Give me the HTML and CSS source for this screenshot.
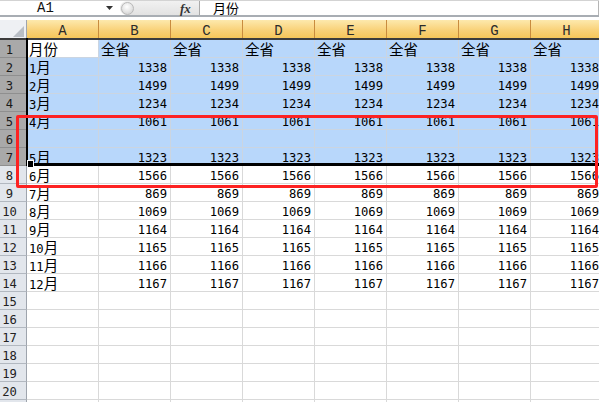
FILE: index.html
```html
<!DOCTYPE html>
<html lang="zh">
<head>
<meta charset="utf-8">
<link rel="stylesheet" href="styles.css">
</head>
<body>
<div class="fbar">
  <div class="namebox">
    <span class="ref">A1</span>
    <svg class="dd" viewBox="0 0 7 4"><path d="M0 0H7L3.5 4Z" fill="#333"/></svg>
  </div>
  <div class="tools">
    <span class="knob"></span>
    <span class="fx">fx</span>
  </div>
  <div class="formula">月份</div>
</div>
<div class="fsep"></div>

<div class="sheet">
  <div class="hdr">
    <div class="corner"><svg class="tri" viewBox="0 0 12 12"><path d="M12 0V12H0Z" fill="#b9bec5"/></svg></div>
    <div class="ch">A</div><div class="ch">B</div><div class="ch">C</div><div class="ch">D</div>
    <div class="ch">E</div><div class="ch">F</div><div class="ch">G</div><div class="ch">H</div>
  </div>

  <div class="row sel"><div class="rh">1</div><div class="c active">月份</div><div class="c">全省</div><div class="c">全省</div><div class="c">全省</div><div class="c">全省</div><div class="c">全省</div><div class="c">全省</div><div class="c">全省</div></div>
  <div class="row sel"><div class="rh">2</div><div class="c"><span class="d">1</span>月</div><div class="c n">1338</div><div class="c n">1338</div><div class="c n">1338</div><div class="c n">1338</div><div class="c n">1338</div><div class="c n">1338</div><div class="c n">1338</div></div>
  <div class="row sel"><div class="rh">3</div><div class="c"><span class="d">2</span>月</div><div class="c n">1499</div><div class="c n">1499</div><div class="c n">1499</div><div class="c n">1499</div><div class="c n">1499</div><div class="c n">1499</div><div class="c n">1499</div></div>
  <div class="row sel"><div class="rh">4</div><div class="c"><span class="d">3</span>月</div><div class="c n">1234</div><div class="c n">1234</div><div class="c n">1234</div><div class="c n">1234</div><div class="c n">1234</div><div class="c n">1234</div><div class="c n">1234</div></div>
  <div class="row sel"><div class="rh">5</div><div class="c"><span class="d">4</span>月</div><div class="c n">1061</div><div class="c n">1061</div><div class="c n">1061</div><div class="c n">1061</div><div class="c n">1061</div><div class="c n">1061</div><div class="c n">1061</div></div>
  <div class="row sel"><div class="rh">6</div><div class="c"></div><div class="c"></div><div class="c"></div><div class="c"></div><div class="c"></div><div class="c"></div><div class="c"></div><div class="c"></div></div>
  <div class="row sel"><div class="rh">7</div><div class="c"><span class="d">5</span>月</div><div class="c n">1323</div><div class="c n">1323</div><div class="c n">1323</div><div class="c n">1323</div><div class="c n">1323</div><div class="c n">1323</div><div class="c n">1323</div></div>
  <div class="row"><div class="rh">8</div><div class="c"><span class="d">6</span>月</div><div class="c n">1566</div><div class="c n">1566</div><div class="c n">1566</div><div class="c n">1566</div><div class="c n">1566</div><div class="c n">1566</div><div class="c n">1566</div></div>
  <div class="row"><div class="rh">9</div><div class="c"><span class="d">7</span>月</div><div class="c n">869</div><div class="c n">869</div><div class="c n">869</div><div class="c n">869</div><div class="c n">869</div><div class="c n">869</div><div class="c n">869</div></div>
  <div class="row"><div class="rh">10</div><div class="c"><span class="d">8</span>月</div><div class="c n">1069</div><div class="c n">1069</div><div class="c n">1069</div><div class="c n">1069</div><div class="c n">1069</div><div class="c n">1069</div><div class="c n">1069</div></div>
  <div class="row"><div class="rh">11</div><div class="c"><span class="d">9</span>月</div><div class="c n">1164</div><div class="c n">1164</div><div class="c n">1164</div><div class="c n">1164</div><div class="c n">1164</div><div class="c n">1164</div><div class="c n">1164</div></div>
  <div class="row"><div class="rh">12</div><div class="c"><span class="d">10</span>月</div><div class="c n">1165</div><div class="c n">1165</div><div class="c n">1165</div><div class="c n">1165</div><div class="c n">1165</div><div class="c n">1165</div><div class="c n">1165</div></div>
  <div class="row"><div class="rh">13</div><div class="c"><span class="d">11</span>月</div><div class="c n">1166</div><div class="c n">1166</div><div class="c n">1166</div><div class="c n">1166</div><div class="c n">1166</div><div class="c n">1166</div><div class="c n">1166</div></div>
  <div class="row"><div class="rh">14</div><div class="c"><span class="d">12</span>月</div><div class="c n">1167</div><div class="c n">1167</div><div class="c n">1167</div><div class="c n">1167</div><div class="c n">1167</div><div class="c n">1167</div><div class="c n">1167</div></div>
  <div class="row"><div class="rh">15</div><div class="c"></div><div class="c"></div><div class="c"></div><div class="c"></div><div class="c"></div><div class="c"></div><div class="c"></div><div class="c"></div></div>
  <div class="row"><div class="rh">16</div><div class="c"></div><div class="c"></div><div class="c"></div><div class="c"></div><div class="c"></div><div class="c"></div><div class="c"></div><div class="c"></div></div>
  <div class="row"><div class="rh">17</div><div class="c"></div><div class="c"></div><div class="c"></div><div class="c"></div><div class="c"></div><div class="c"></div><div class="c"></div><div class="c"></div></div>
  <div class="row"><div class="rh">18</div><div class="c"></div><div class="c"></div><div class="c"></div><div class="c"></div><div class="c"></div><div class="c"></div><div class="c"></div><div class="c"></div></div>
  <div class="row"><div class="rh">19</div><div class="c"></div><div class="c"></div><div class="c"></div><div class="c"></div><div class="c"></div><div class="c"></div><div class="c"></div><div class="c"></div></div>
  <div class="row"><div class="rh">20</div><div class="c"></div><div class="c"></div><div class="c"></div><div class="c"></div><div class="c"></div><div class="c"></div><div class="c"></div><div class="c"></div></div>
  <div class="row"><div class="rh">21</div><div class="c"></div><div class="c"></div><div class="c"></div><div class="c"></div><div class="c"></div><div class="c"></div><div class="c"></div><div class="c"></div></div>
</div>

<div class="sel-left"></div>
<div class="sel-bottom"></div>
<div class="handle"></div>
<div class="mark"></div>
</body>
</html>
```

FILE: styles.css
```css
* { box-sizing: border-box; margin: 0; padding: 0; }
html, body { width: 599px; height: 402px; overflow: hidden; background: #fff; }
body { position: relative; font-family: "Noto Sans CJK SC", sans-serif; color: #000; }

/* formula bar */
.fbar { display: flex; height: 15px; border-top: 1px solid #d3d3d3; background: #fff; }
.namebox { width: 117px; display: flex; align-items: center; }
.ref { flex: 1; padding-left: 37px; font: 14px/14px "Liberation Mono", monospace; color: #111; }
.dd { width: 7px; height: 4px; margin-right: 4px; }
.tools {
  width: 80px; margin-left: 3px; display: flex; align-items: center;
  background: linear-gradient(#f1f1f1, #e2e2e2);
  border-radius: 7px 0 0 7px; border-right: 1px solid #a9a9a9;
}
.knob {
  width: 13px; height: 13px; border-radius: 50%; margin-left: 1px;
  background: radial-gradient(circle at 45% 35%, #ffffff 0%, #e9e9e9 45%, #c9c9c9 100%);
  border: 1px solid #b9b9b9;
}
.fx { margin-left: 46px; font: italic bold 13px/13px "Liberation Serif", serif; color: #333; }
.formula { flex: 1; padding-left: 13px; font-size: 13px; line-height: 14px; color: #000; border-right: 1px solid #b5b5b5; }
.fsep { height: 5px; border-top: 2px solid #a8adb3; background: #fff; }

/* sheet */
.hdr, .row { display: grid; grid-template-columns: 27px repeat(8, 72px); }
.hdr { height: 20px; border-bottom: 2px solid #3c3c3c; }
.corner { position: relative; background: #eef0f3; border-right: 1px solid #9ea4ad; }
.tri { position: absolute; right: 2px; bottom: 1px; width: 11px; height: 11px; }
.ch {
  background: linear-gradient(#fde9ad, #f9d27a 55%, #f6c65a);
  border-right: 1px solid #c98c3e;
  text-align: center; overflow: hidden; padding-top: 4px;
  font: 14px/14px "Liberation Mono", monospace; color: #2b2b2b;
}

.row { height: 18px; }
.rh {
  background: #e2e6ec; border-right: 1px solid #9ea4ad; border-bottom: 1px solid #b2b8c0;
  text-align: center; padding: 3px 7px 0 0; overflow: hidden;
  font: 12.2px/14px "DejaVu Sans Mono", monospace; color: #222;
}
.c {
  border-right: 1px solid #d9d9d9; border-bottom: 1px solid #d9d9d9;
  padding: 0 2px; overflow: hidden; white-space: nowrap;
  font-size: 14.5px; line-height: 17px;
}
.d { font: 12.2px/12px "DejaVu Sans Mono", monospace; }
.n { text-align: right; padding: 3px 3px 0 0; font: 12.2px/14px "DejaVu Sans Mono", monospace; }

.sel .rh { background: #a9a9a9; border-bottom-color: #8f8f8f; color: #1a1a1a; }
.sel .c { background: #b8d7fb; border-color: #cbd5e1; }
.sel .c.active { background: #fff; }

/* overlays */
.sel-left { position: absolute; left: 26px; top: 38px; width: 2px; height: 128px; background: #000; }
.sel-bottom { position: absolute; left: 26px; right: 0; top: 163px; height: 3px; background: #000; }
.handle { position: absolute; left: 28px; top: 161px; width: 5px; height: 6px; background: #000; outline: 1px solid #fff; }
.mark {
  position: absolute; left: 16px; top: 115px; width: 582px; height: 73px;
  border: 3px solid #fd2222; border-radius: 2px;
}
```
